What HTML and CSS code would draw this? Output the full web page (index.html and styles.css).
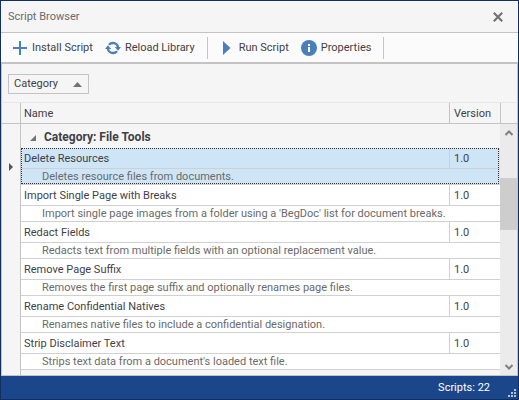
FILE: index.html
```html
<!DOCTYPE html>
<html lang="en">

<head>
  <meta charset="UTF-8">
  <meta name="viewport" content="width=device-width, initial-scale=1.0">
  <title>Script Browser</title>
  <link rel="stylesheet" href="styles.css">
</head>

<body>
  <header class="titlebar">
    <h1>Script Browser</h1>
    <button class="close" aria-label="Close">
      <svg viewBox="0 0 10 10" width="10" height="10" fill="none" stroke="currentColor" stroke-width="2.2">
        <path d="M.8.8l8.4 8.4M9.2.8L.8 9.2"></path>
      </svg>
    </button>
  </header>

  <nav class="toolbar">
    <button class="tool">
      <svg viewBox="0 0 16 16" width="16" height="16" fill="none" stroke="currentColor" stroke-width="2">
        <path d="M8 1v14M1 8h14"></path>
      </svg>
      Install Script
    </button>
    <button class="tool">
      <svg viewBox="0 0 16 14" width="16" height="14" fill="none" stroke="currentColor" stroke-width="2.4">
        <path d="M4 3.8C5 2.6 6.4 2 8 2c2.8 0 4.9 2 5.1 4.5M12 10.2C11 11.4 9.6 12 8 12c-2.8 0-4.9-2-5.1-4.5"></path>
        <path d="M9.8 6H16l-2.9 3.8zM6.2 8H0l2.9-3.8z" fill="currentColor" stroke="none"></path>
      </svg>
      Reload Library
    </button>
    <span class="separator"></span>
    <button class="tool">
      <svg viewBox="0 0 16 16" width="16" height="16" fill="currentColor">
        <path d="M4 1l7.5 7L4 15z"></path>
      </svg>
      Run Script
    </button>
    <button class="tool">
      <svg viewBox="0 0 16 16" width="16" height="16">
        <circle cx="8" cy="8" r="8" fill="currentColor"></circle>
        <path d="M7 4h2v2H7zM7 7h2v5H7z" fill="#fff"></path>
      </svg>
      Properties
    </button>
    <span class="separator"></span>
  </nav>

  <div class="group-panel">
    <button class="group-field">
      Category
      <svg viewBox="0 0 9 5" width="9" height="5" fill="currentColor"><path d="M0 5L4.5 0 9 5z"></path></svg>
    </button>
  </div>

  <main class="grid">
    <div class="rows">
      <table>
        <colgroup>
          <col class="col-indicator">
          <col>
          <col class="col-version">
        </colgroup>
        <thead>
          <tr>
            <th class="indicator"></th>
            <th class="name">Name</th>
            <th class="version">Version</th>
          </tr>
        </thead>
        <tbody>
          <tr class="group-row">
            <td class="indicator"></td>
            <td colspan="2">
              <svg viewBox="0 0 6 6" width="6" height="6" fill="currentColor"><path d="M6 0v6H0z"></path></svg>
              Category: File Tools
            </td>
          </tr>
        </tbody>
        <tbody class="script selected">
          <tr>
            <td class="indicator" rowspan="2">
              <svg viewBox="0 0 4 8" width="4" height="8" fill="currentColor"><path d="M0 0l4 4-4 4z"></path></svg>
            </td>
            <td class="name">Delete Resources</td>
            <td class="version">1.0</td>
          </tr>
          <tr>
            <td class="description" colspan="2">Deletes resource files from documents.</td>
          </tr>
        </tbody>
        <tbody class="script">
          <tr>
            <td class="indicator" rowspan="2"></td>
            <td class="name">Import Single Page with Breaks</td>
            <td class="version">1.0</td>
          </tr>
          <tr>
            <td class="description" colspan="2">Import single page images from a folder using a 'BegDoc' list for document breaks.</td>
          </tr>
        </tbody>
        <tbody class="script">
          <tr>
            <td class="indicator" rowspan="2"></td>
            <td class="name">Redact Fields</td>
            <td class="version">1.0</td>
          </tr>
          <tr>
            <td class="description" colspan="2">Redacts text from multiple fields with an optional replacement value.</td>
          </tr>
        </tbody>
        <tbody class="script">
          <tr>
            <td class="indicator" rowspan="2"></td>
            <td class="name">Remove Page Suffix</td>
            <td class="version">1.0</td>
          </tr>
          <tr>
            <td class="description" colspan="2">Removes the first page suffix and optionally renames page files.</td>
          </tr>
        </tbody>
        <tbody class="script">
          <tr>
            <td class="indicator" rowspan="2"></td>
            <td class="name">Rename Confidential Natives</td>
            <td class="version">1.0</td>
          </tr>
          <tr>
            <td class="description" colspan="2">Renames native files to include a confidential designation.</td>
          </tr>
        </tbody>
        <tbody class="script">
          <tr>
            <td class="indicator" rowspan="2"></td>
            <td class="name">Strip Disclaimer Text</td>
            <td class="version">1.0</td>
          </tr>
          <tr>
            <td class="description" colspan="2">Strips text data from a document's loaded text file.</td>
          </tr>
        </tbody>
      </table>
      <div class="filler"></div>
    </div>
    <div class="scrollbar">
      <div class="corner"></div>
      <button class="scroll-button" aria-label="Scroll up">
        <svg viewBox="0 0 8 6" width="8" height="6" fill="none" stroke="currentColor" stroke-width="2"><path d="M.5 5L4 1.5 7.5 5"></path></svg>
      </button>
      <div class="track"><div class="thumb"></div></div>
      <button class="scroll-button" aria-label="Scroll down">
        <svg viewBox="0 0 8 6" width="8" height="6" fill="none" stroke="currentColor" stroke-width="2"><path d="M.5 1L4 4.5 7.5 1"></path></svg>
      </button>
    </div>
  </main>

  <footer class="statusbar">
    <span>Scripts: 22</span>
    <svg class="grip" viewBox="0 0 8 8" width="8" height="8" fill="currentColor">
      <path d="M6 0h2v2H6zM3 3h2v2H3zM6 3h2v2H6zM0 6h2v2H0zM3 6h2v2H3zM6 6h2v2H6z"></path>
    </svg>
  </footer>
</body>

</html>
```
FILE: styles.css
```css
:root {
  --frame: #12305f;
  --line: #c3c3c3;
  --row-line: #d0d0d0;
  --panel: #f5f5f5;
  --text: #3f3f46;
  --muted: #6a6a6a;
  --accent: #4a7fba;
}

* {
  box-sizing: border-box;
}

body {
  display: flex;
  flex-direction: column;
  height: 100vh;
  margin: 0;
  border: 1px solid var(--frame);
  background: var(--panel);
  color: var(--text);
  font: 11px/14px Tahoma, Roboto, sans-serif;
}

button {
  padding: 0;
  border: none;
  background: transparent;
  color: inherit;
  font: inherit;
}

svg {
  flex: none;
}

.titlebar {
  display: flex;
  align-items: center;
  justify-content: space-between;
  height: 32px;
  padding: 0 15px 0 7px;
  border-bottom: 1px solid var(--line);
  color: var(--muted);
}

.titlebar h1 {
  margin: 0;
  font-size: 11px;
  font-weight: 400;
}

.close {
  display: flex;
  color: #737373;
}

.toolbar {
  display: flex;
  align-items: center;
  height: 31px;
  padding-left: 11px;
  border-bottom: 2px solid var(--line);
  background: #fbfbfb;
}

.tool {
  display: flex;
  align-items: center;
  gap: 4px;
  margin-right: 12px;
  white-space: nowrap;
}

.tool svg {
  color: var(--accent);
}

.separator {
  width: 1px;
  height: 22px;
  margin-right: 11px;
  background: var(--line);
}

.group-panel {
  padding: 10px 7px 8px 6px;
  border: solid var(--line);
  border-width: 0 1px;
}

.group-field {
  display: flex;
  align-items: center;
  gap: 15px;
  height: 20px;
  padding: 0 6px 0 5px;
  border: 1px solid var(--line);
}

.group-field svg {
  color: #737373;
}

.grid {
  flex: 1;
  display: flex;
  min-height: 0;
  border: 1px solid var(--line);
  border-top-color: #e6e6e6;
}

.rows {
  flex: 1;
  display: flex;
  flex-direction: column;
}

.filler {
  flex: 1;
  margin-left: 18px;
  border-left: 1px solid var(--line);
}

table {
  width: 100%;
  table-layout: fixed;
  border-spacing: 0;
}

.col-indicator {
  width: 19px;
}

.col-version {
  width: 50px;
}

th,
td {
  padding: 1px 3px 0;
  text-align: left;
  white-space: nowrap;
}

th {
  height: 21px;
  border-bottom: 1px solid var(--line);
  font-weight: 400;
}

th.name {
  border-right: 1px solid var(--line);
}

.indicator {
  padding: 0;
  border-right: 1px solid var(--line);
  background: var(--panel);
}

.indicator svg {
  display: block;
  margin: auto;
  color: #555;
}

.version {
  padding-left: 4px;
}

.group-row td {
  height: 24px;
  font-size: 12px;
  font-weight: 700;
}

.group-row svg {
  margin: 0 5px 0 6px;
  color: #737373;
}

.script {
  position: relative;
  background: #fff;
}

.script .name,
.script .version {
  height: 21px;
  border-bottom: 1px solid var(--row-line);
}

.script .name {
  border-right: 1px solid var(--row-line);
}

.script .description {
  height: 16px;
  padding-left: 21px;
  border-bottom: 1px solid var(--row-line);
  color: var(--muted);
}

.selected {
  background: #cde5f7;
}

/* Focus rectangle around the two data rows */
.selected::after {
  content: "";
  position: absolute;
  inset: 0 1px 1px 19px;
  border: 1px dotted #333;
}

.scrollbar {
  display: flex;
  flex-direction: column;
  width: 17px;
  background: #ebebeb;
}

.corner {
  height: 21px;
  border: solid var(--line);
  border-width: 0 0 1px 1px;
  background: var(--panel);
}

.scroll-button {
  display: grid;
  place-items: center;
  height: 17px;
  color: #808080;
}

.track {
  flex: 1;
  padding-top: 37px;
}

.thumb {
  height: 52px;
  background: #cdcdcd;
}

.statusbar {
  display: flex;
  align-items: center;
  justify-content: flex-end;
  gap: 18px;
  height: 23px;
  padding-right: 2px;
  background: #1b478a;
  color: #fff;
}

.grip {
  align-self: flex-end;
  margin-bottom: 2px;
  color: #b4c3da;
}
```
